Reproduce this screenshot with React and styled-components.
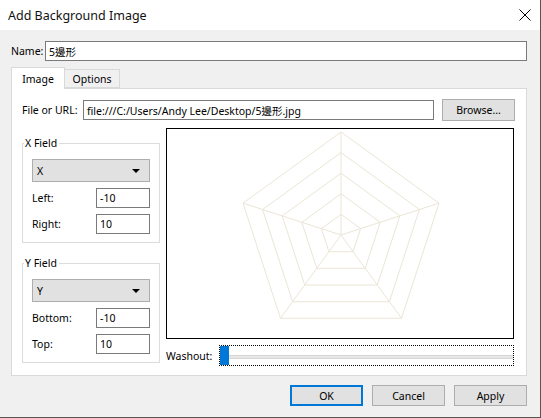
import React from 'react';
import styled, { createGlobalStyle } from 'styled-components';

const GlobalStyle = createGlobalStyle`
  html, body { margin: 0; padding: 0; background: #f0f0f0; }
  * { box-sizing: border-box; }
  body {
    font-family: "Noto Sans", "Noto Sans CJK TC", sans-serif;
    font-size: 10.5px;
    color: #000;
  }
`;

const UI = '"Noto Sans", "Noto Sans CJK TC", sans-serif';

const Window = styled.div`
  width: 541px;
  height: 418px;
  display: flex;
  flex-direction: column;
  background: #f0f0f0;
  border-right: 1px solid #5a5550;
  border-bottom: 1px solid #5a5550;
  overflow: hidden;
`;

const TitleBar = styled.div`
  height: 30px;
  flex: none;
  background: #fff;
  display: flex;
  align-items: center;
  justify-content: space-between;
  padding: 0 9px 0 8px;
`;

const Title = styled.span`
  font-size: 12.5px;
  font-family: ${UI};
  color: #111;
`;

const Close = styled.svg`
  width: 12px;
  height: 12px;
`;

const Body = styled.div`
  flex: 1;
  display: flex;
  flex-direction: column;
  padding: 11px 13px 0 11px;
`;

const Row = styled.div`
  display: flex;
  align-items: center;
  gap: ${p => p.gap || 0}px;
`;

const Label = styled.span`
  width: ${p => (p.w ? `${p.w}px` : 'auto')};
  flex: none;
  white-space: nowrap;
`;

const TextInput = styled.div`
  height: 20px;
  width: ${p => (p.w ? `${p.w}px` : 'auto')};
  flex: ${p => (p.w ? 'none' : 1)};
  background: #fff;
  border: 1px solid #7a7a7a;
  padding: 0 3px;
  display: flex;
  align-items: center;
  white-space: nowrap;
  overflow: hidden;
`;

const Tabs = styled.div`
  display: flex;
  align-items: flex-end;
  height: 21px;
  margin-top: 6px;
  position: relative;
  z-index: 1;
`;

const Tab = styled.div`
  height: ${p => (p.active ? 22 : 19)}px;
  width: ${p => p.w}px;
  background: ${p => (p.active ? '#fff' : '#f0f0f0')};
  border: 1px solid #d9d9d9;
  border-bottom: ${p => (p.active ? 'none' : '1px solid #d9d9d9')};
  border-left: ${p => (p.first ? '1px solid #d9d9d9' : 'none')};
  display: flex;
  align-items: center;
  justify-content: center;
  margin-bottom: ${p => (p.active ? -1 : 0)}px;
`;

const Panel = styled.div`
  width: 516px;
  height: 288px;
  background: #fff;
  border: 1px solid #d9d9d9;
  padding: 10px 12px 0 10px;
  display: flex;
  flex-direction: column;
`;

const Button = styled.div`
  height: ${p => p.h || 21}px;
  width: ${p => p.w}px;
  flex: none;
  background: #e1e1e1;
  border: ${p => (p.primary ? '2px solid #0078d7' : '1px solid #adadad')};
  display: flex;
  align-items: center;
  justify-content: center;
`;

const Columns = styled.div`
  display: flex;
  gap: 6px;
  margin-top: 7px;
`;

const LeftCol = styled.div`
  width: 139px;
  display: flex;
  flex-direction: column;
  gap: 20px;
  margin-top: 15px;
`;

const Group = styled.div`
  position: relative;
  border: 1px solid #dcdcdc;
  padding: 15px 9px 8px 9px;
  display: flex;
  flex-direction: column;
`;

const Legend = styled.span`
  position: absolute;
  top: -8px;
  left: 1px;
  background: #fff;
  padding: 0 2px 0 1px;
`;

const Select = styled.div`
  height: 23px;
  background: #e1e1e1;
  border: 1px solid #adadad;
  display: flex;
  align-items: center;
  justify-content: space-between;
  padding: 0 9px 0 4px;
  margin-bottom: 6px;
`;

const Caret = styled.span`
  width: 0;
  height: 0;
  border-left: 4px solid transparent;
  border-right: 4px solid transparent;
  border-top: 4px solid #000;
`;

const FieldRow = styled.div`
  display: flex;
  align-items: center;
  justify-content: space-between;
  margin-top: ${p => p.mt || 0}px;
`;

const RightCol = styled.div`
  width: 349px;
  display: flex;
  flex-direction: column;
`;

const Preview = styled.div`
  height: 211px;
  border: 1.5px solid #000;
  display: flex;
  align-items: center;
  justify-content: center;
`;

const WashRow = styled.div`
  display: flex;
  align-items: center;
  margin-top: 6px;
  gap: 7px;
`;

const Slider = styled.div`
  flex: 1;
  height: 21px;
  border: 1px dotted #000;
  position: relative;
  display: flex;
  align-items: center;
`;

const Track = styled.div`
  flex: 1;
  height: 4px;
  background: #e7e7e7;
  border-top: 1px solid #d6d6d6;
  border-bottom: 1px solid #d6d6d6;
  margin-top: 2px;
`;

const Thumb = styled.div`
  position: absolute;
  left: 0;
  top: 0;
  width: 9px;
  height: 19px;
  background: #0078d7;
`;

const Footer = styled.div`
  display: flex;
  justify-content: flex-end;
  gap: 9px;
  margin-top: 9px;
`;

function Spider() {
  const cx = 174;
  const cy = 105;
  const R = 103;
  const pts = r =>
    [0, 1, 2, 3, 4]
      .map(i => {
        const a = (-90 + i * 72) * (Math.PI / 180);
        return `${(cx + r * Math.cos(a)).toFixed(1)},${(cy + r * Math.sin(a)).toFixed(1)}`;
      })
      .join(' ');
  return (
    <svg width="346" height="208" viewBox="0 0 346 208">
      <g fill="none" stroke="#ebe5d6" strokeWidth="1">
        {[1, 2, 3, 4, 5].map(k => (
          <polygon key={k} points={pts((R * k) / 5)} />
        ))}
        {[0, 1, 2, 3, 4].map(i => {
          const a = (-90 + i * 72) * (Math.PI / 180);
          return <line key={i} x1={cx} y1={cy} x2={cx + R * Math.cos(a)} y2={cy + R * Math.sin(a)} />;
        })}
      </g>
    </svg>
  );
}

function AxisGroup({ name, value, lo, hi }) {
  return (
    <Group>
      <Legend>{name}</Legend>
      <Select>
        <span>{value}</span>
        <Caret />
      </Select>
      <FieldRow>
        <Label>{lo}</Label>
        <TextInput w={54}>-10</TextInput>
      </FieldRow>
      <FieldRow mt={6}>
        <Label>{hi}</Label>
        <TextInput w={54}>10</TextInput>
      </FieldRow>
    </Group>
  );
}

export default function App() {
  return (
    <>
      <GlobalStyle />
      <Window>
        <TitleBar>
          <Title>Add Background Image</Title>
          <Close viewBox="0 0 12 12">
            <path d="M0.5 0.5 L11.5 11.5 M11.5 0.5 L0.5 11.5" stroke="#000" strokeWidth="1" />
          </Close>
        </TitleBar>
        <Body>
          <Row gap={4}>
            <Label w={30}>Name:</Label>
            <TextInput>5邊形</TextInput>
          </Row>
          <Tabs>
            <Tab active first w={54}>Image</Tab>
            <Tab w={55}>Options</Tab>
          </Tabs>
          <Panel>
            <Row gap={4}>
              <Label w={57}>File or URL:</Label>
              <TextInput w={351}>file:///C:/Users/Andy Lee/Desktop/5邊形.jpg</TextInput>
              <Button w={73} h={22} style={{ marginLeft: 4 }}>Browse...</Button>
            </Row>
            <Columns>
              <LeftCol>
                <AxisGroup name="X Field" value="X" lo="Left:" hi="Right:" />
                <AxisGroup name="Y Field" value="Y" lo="Bottom:" hi="Top:" />
              </LeftCol>
              <RightCol>
                <Preview>
                  <Spider />
                </Preview>
                <WashRow>
                  <Label>Washout:</Label>
                  <Slider>
                    <Thumb />
                    <Track />
                  </Slider>
                </WashRow>
              </RightCol>
            </Columns>
          </Panel>
          <Footer>
            <Button primary w={73}>OK</Button>
            <Button w={73}>Cancel</Button>
            <Button w={73}>Apply</Button>
          </Footer>
        </Body>
      </Window>
    </>
  );
}
